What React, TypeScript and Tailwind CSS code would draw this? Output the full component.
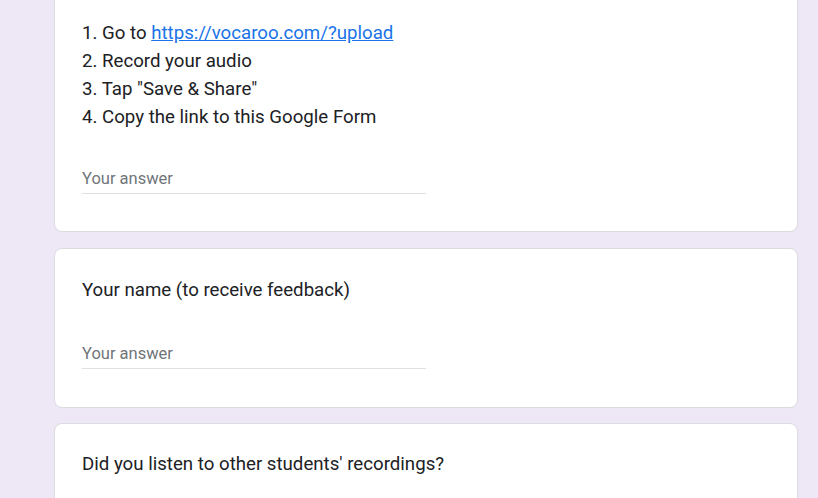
export default function App() {
  const font = { fontFamily: "Roboto, 'Liberation Sans', Arial, sans-serif" };
  return (
    <div className="h-[498px] w-[818px] overflow-hidden bg-[#ede7f6]" style={font}>
      <div className="ml-[54px] flex w-[744px] flex-col">
        {/* Instructions card (top runs past the window) */}
        <div className="rounded-b-[8px] border border-t-0 border-[#dadce0] bg-white pl-[27px] pt-[19px] pb-[37px]">
          <div className="text-[18.67px] leading-[28px] text-[#202124]">
            <div>
              1. Go to{" "}
              <a href="#" className="text-[#1a73e8] underline">
                https://vocaroo.com/?upload
              </a>
            </div>
            <div>2. Record your audio</div>
            <div>3. Tap "Save &amp; Share"</div>
            <div>4. Copy the link to this Google Form</div>
          </div>
          <div className="mt-[36px] w-[344px] border-b border-[#e0e0e0] pb-[3px] text-[16.5px] leading-[23px] text-[#70757a]">
            Your answer
          </div>
        </div>

        {/* Name card */}
        <div className="mt-[16px] rounded-[8px] border border-[#dadce0] bg-white pl-[27px] pt-[27px] pb-[38px]">
          <div className="text-[18.67px] leading-[28px] text-[#202124]">
            Your name (to receive feedback)
          </div>
          <div className="mt-[38px] w-[344px] border-b border-[#e0e0e0] pb-[3px] text-[16.5px] leading-[23px] text-[#70757a]">
            Your answer
          </div>
        </div>

        {/* Listening card */}
        <div className="mt-[15px] h-[200px] rounded-[8px] border border-[#dadce0] bg-white pl-[27px] pt-[26px]">
          <div className="text-[18.67px] leading-[28px] text-[#202124]">
            Did you listen to other students' recordings?
          </div>
        </div>
      </div>
    </div>
  );
}
